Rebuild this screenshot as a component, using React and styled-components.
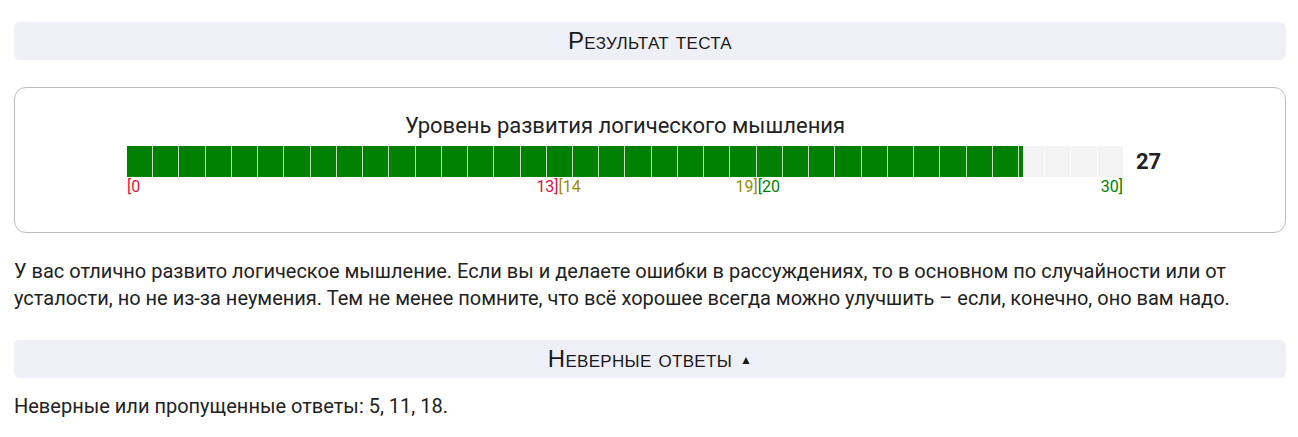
import React from "react";
import styled, { createGlobalStyle } from "styled-components";

const GlobalStyle = createGlobalStyle`
  body {
    margin: 0;
    background: #fff;
    font-family: Roboto, "Noto Sans", sans-serif;
    color: #222;
  }
`;

const MAX = 30;
const SCORE = 27;
const CELLS = 38;

const ranges = [
  { from: 0, to: 13, color: "#dc143c" },
  { from: 14, to: 19, color: "#a08a00" },
  { from: 20, to: 30, color: "#008000" },
];

function App() {
  return (
    <Page>
      <GlobalStyle />
      <SectionHeader>Результат теста</SectionHeader>

      <Card>
        <Chart>
          <ChartTitle>Уровень развития логического мышления</ChartTitle>
          <span />
          <Track>
            <Fill style={{ width: `${(SCORE / MAX) * 100}%` }} />
            <Grid>
              {Array.from({ length: CELLS }).map((_, i) => (
                <Cell key={i} first={i === 0} />
              ))}
            </Grid>
          </Track>
          <Score>{SCORE}</Score>
          <Scale>
            {ranges.map((r) => (
              <React.Fragment key={r.from}>
                <Mark
                  color={r.color}
                  style={{ left: `${(r.from === 0 ? 0 : (r.from - 1) / MAX) * 100}%` }}
                >
                  [{r.from}
                </Mark>
                <Mark
                  color={r.color}
                  style={{ right: `${(1 - r.to / MAX) * 100}%` }}
                >
                  {r.to}]
                </Mark>
              </React.Fragment>
            ))}
          </Scale>
        </Chart>
      </Card>

      <Text>
        У вас отлично развито логическое мышление. Если вы и делаете ошибки в
        рассуждениях, то в основном по случайности или от усталости, но не из-за
        неумения. Тем не менее помните, что всё хорошее всегда можно улучшить –
        если, конечно, оно вам надо.
      </Text>

      <SectionHeader>
        Неверные ответы <Arrow>▲</Arrow>
      </SectionHeader>

      <Answers>Неверные или пропущенные ответы: 5, 11, 18.</Answers>
    </Page>
  );
}

export default App;

const Page = styled.div`
  padding: 22px 12px 0 14px;
  display: flex;
  flex-direction: column;
`;

const SectionHeader = styled.div`
  height: 38px;
  display: flex;
  align-items: center;
  justify-content: center;
  gap: 8px;
  background: #efeff7;
  border-radius: 6px;
  font-family: "Liberation Sans", Arial, sans-serif;
  font-size: 24px;
  letter-spacing: 0.3px;
  font-variant: small-caps;
  color: #1a1a1a;
`;

const Arrow = styled.span`
  font-size: 12px;
  font-variant: normal;
  margin-top: 1px;
`;

const Card = styled.div`
  margin-top: 27px;
  height: 146px;
  box-sizing: border-box;
  border: 1px solid #bbb;
  border-radius: 12px;
  padding-top: 24px;
`;

const Chart = styled.div`
  display: grid;
  grid-template-columns: 996px auto;
  column-gap: 13px;
  margin-left: 112px;
`;

const ChartTitle = styled.div`
  text-align: center;
  font-size: 22px;
  line-height: 28px;
  color: #222;
  margin-bottom: 6px;
`;

const Track = styled.div`
  position: relative;
  height: 31px;
  background: #f3f3f3;
`;

const Fill = styled.div`
  height: 100%;
  background: #008000;
`;

const Grid = styled.div`
  position: absolute;
  inset: 0;
  display: flex;
`;

const Cell = styled.div`
  flex: 1;
  border-left: ${(p) => (p.first ? "none" : "1.5px solid rgba(255, 255, 255, 0.75)")};
`;

const Score = styled.div`
  align-self: center;
  font-size: 22px;
  font-weight: 700;
  color: #222;
`;

const Scale = styled.div`
  position: relative;
  height: 20px;
  font-size: 16px;
  line-height: 20px;
`;

const Mark = styled.span`
  position: absolute;
  top: 0;
  color: ${(p) => p.color};
`;

const Text = styled.p`
  margin: 25px 0 28px;
  padding-right: 40px;
  font-size: 20px;
  line-height: 27px;
  color: #222;
`;

const Answers = styled.div`
  margin-top: 15px;
  font-size: 20px;
  line-height: 27px;
  color: #222;
`;
